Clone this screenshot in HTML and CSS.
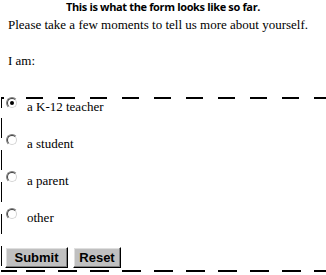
FILE: index.html
```html
<!DOCTYPE html>
<html>
<head>
<meta charset="utf-8">
<link rel="stylesheet" href="styles.css">
</head>
<body>
<h1 class="title">This is what the form looks like so far.</h1>
<p class="intro">Please take a few moments to tell us more about yourself.</p>
<p class="iam">I am:</p>
<form class="box">
  <div class="row"><span class="radio checked"></span><span class="label">a K-12 teacher</span></div>
  <div class="row"><span class="radio"></span><span class="label">a student</span></div>
  <div class="row"><span class="radio"></span><span class="label">a parent</span></div>
  <div class="row"><span class="radio"></span><span class="label">other</span></div>
  <div class="buttons">
    <button type="button" class="btn submit">Submit</button>
    <button type="button" class="btn reset">Reset</button>
  </div>
</form>
</body>
</html>
```
FILE: styles.css
```css
html, body {
  margin: 0;
  padding: 0;
  background: #fff;
}
body {
  width: 326px;
  height: 275px;
  overflow: hidden;
  font-family: "Liberation Serif", "Times New Roman", serif;
  color: #000;
}
.title {
  margin: 0;
  font-family: "Open Sans", "Liberation Sans", sans-serif;
  font-weight: 700;
  font-size: 11px;
  line-height: 14px;
  text-align: center;
  letter-spacing: -0.35px;
}
.intro {
  margin: 3px 0 0 8px;
  font-size: 13px;
  line-height: 15px;
  white-space: nowrap;
}
.iam {
  margin: 21px 0 0 8px;
  font-size: 13px;
  line-height: 15px;
}
.box {
  margin: 29px 0 0 1px;
  padding: 0 0 4px 5px;
  height: 175px;
  box-sizing: border-box;
  background:
    linear-gradient(#000, #000) 0 0 / 3px 2px no-repeat,
    repeating-linear-gradient(to right, #000 0 17px, transparent 17px 32px) 25px 0 / calc(100% - 25px) 2px no-repeat,
    linear-gradient(#000, #000) 0 0 / 1px 11px no-repeat,
    repeating-linear-gradient(to bottom, #000 0 20px, transparent 20px 32px) 0 21px / 1px calc(100% - 21px) no-repeat,
    linear-gradient(#000, #000) 0 100% / 16px 2px no-repeat,
    repeating-linear-gradient(to right, #000 0 19px, transparent 19px 32px) 25px 100% / calc(100% - 25px) 2px no-repeat;
}
.row {
  display: flex;
  align-items: flex-start;
  height: 37px;
}
.radio {
  position: relative;
  flex: none;
  width: 12px;
  height: 12px;
  margin-top: 0;
  box-sizing: border-box;
  border-radius: 50%;
  border: 1px solid;
  border-color: #808080 #fff #fff #808080;
}
.radio::before {
  content: "";
  position: absolute;
  inset: 0;
  border-radius: 50%;
  border: 1px solid;
  border-color: #404040 #d4d4d4 #d4d4d4 #404040;
  background: #fff;
}
.radio.checked::after {
  content: "";
  position: absolute;
  left: 3px;
  top: 3px;
  width: 4px;
  height: 4px;
  border-radius: 50%;
  background: #000;
}
.label {
  margin-left: 9px;
  padding-top: 2px;
  font-size: 13px;
  line-height: 15px;
}
.buttons {
  display: flex;
  gap: 5px;
  margin: 2px 0 0 -1px;
}
.btn {
  height: 21px;
  padding: 0;
  margin: 0;
  box-sizing: border-box;
  background: #c0c0c0;
  border: 1px solid;
  border-color: #fff #000 #000 #fff;
  box-shadow: inset -1px -1px #808080, inset 1px 1px #dfdfdf;
  font-family: "Liberation Sans", Arial, sans-serif;
  font-weight: 700;
  font-size: 13px;
  line-height: 17px;
  color: #000;
}
.submit { width: 63px; }
.reset { width: 48px; }
```
